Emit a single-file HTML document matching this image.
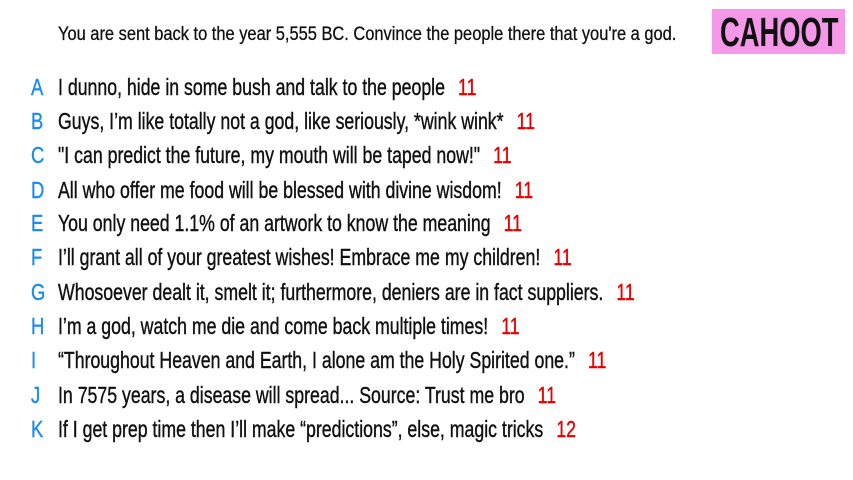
<!DOCTYPE html>
<html><head><meta charset="utf-8"><style>
body{margin:0;width:853px;height:480px;background:#fff;overflow:hidden;position:relative;font-family:"Liberation Sans",sans-serif;color:#111}
.q{position:absolute;left:58px;top:24px;font-size:19px;white-space:nowrap;transform:scaleX(0.865);transform-origin:left center;-webkit-text-stroke:0.3px #111}
.logo{position:absolute;left:712px;top:9px;width:133px;height:45px;background:#f598e8;}
.logo span{position:absolute;left:8px;top:0;font-size:41px;font-weight:bold;line-height:46px;color:#111;white-space:nowrap;transform:scaleX(0.667);transform-origin:left center}
.r{position:absolute;left:0;height:30px;line-height:30px;font-size:23px;white-space:nowrap;-webkit-text-stroke:0.4px currentColor}
.l{position:absolute;left:31px;color:#1a8cf0;transform:scaleX(0.8);transform-origin:left center}
.t{position:absolute;left:58px;transform:scaleX(0.77);transform-origin:left center}
.n{color:#e80000;margin-left:17px;-webkit-text-stroke:0.4px #e80000}
</style></head><body>
<div class="q">You are sent back to the year 5,555 BC. Convince the people there that you're a god.</div>
<div class="logo"><span>CAHOOT</span></div>
<div class="r" style="top:72px"><span class="l">A</span><span class="t">I dunno, hide in some bush and talk to the people<span class="n">11</span></span></div>
<div class="r" style="top:106px"><span class="l">B</span><span class="t">Guys, I’m like totally not a god, like seriously, *wink wink*<span class="n">11</span></span></div>
<div class="r" style="top:140px"><span class="l">C</span><span class="t">"I can predict the future, my mouth will be taped now!"<span class="n">11</span></span></div>
<div class="r" style="top:175px"><span class="l">D</span><span class="t">All who offer me food will be blessed with divine wisdom!<span class="n">11</span></span></div>
<div class="r" style="top:208px"><span class="l">E</span><span class="t">You only need 1.1% of an artwork to know the meaning<span class="n">11</span></span></div>
<div class="r" style="top:242px"><span class="l">F</span><span class="t">I’ll grant all of your greatest wishes! Embrace me my children!<span class="n">11</span></span></div>
<div class="r" style="top:277px"><span class="l">G</span><span class="t">Whosoever dealt it, smelt it; furthermore, deniers are in fact suppliers.<span class="n">11</span></span></div>
<div class="r" style="top:311px"><span class="l">H</span><span class="t">I’m a god, watch me die and come back multiple times!<span class="n">11</span></span></div>
<div class="r" style="top:345px"><span class="l">I</span><span class="t">“Throughout Heaven and Earth, I alone am the Holy Spirited one.”<span class="n">11</span></span></div>
<div class="r" style="top:380px"><span class="l">J</span><span class="t">In 7575 years, a disease will spread... Source: Trust me bro<span class="n">11</span></span></div>
<div class="r" style="top:414px"><span class="l">K</span><span class="t">If I get prep time then I’ll make “predictions”, else, magic tricks<span class="n">12</span></span></div>
</body></html>
